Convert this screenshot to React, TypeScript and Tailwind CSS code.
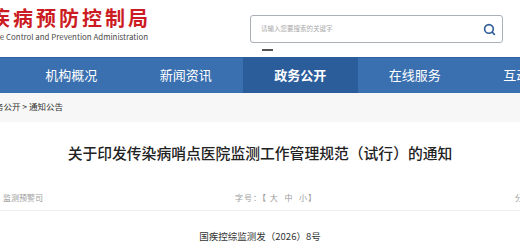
import { Search } from "lucide-react";

const NAV = ["机构概况", "新闻资讯", "政务公开", "在线服务", "互动交流"];

export default function App() {
  return (
    <div
      className="h-[245px] w-[520px] overflow-hidden bg-white text-[#333]"
      style={{ fontFamily: '"Noto Sans CJK SC", "Noto Sans", sans-serif' }}
    >
      {/* header */}
      <header className="flex h-[57px]">
        <div className="flex w-[151px] shrink-0 flex-col items-end pt-[5px]">
          <div className="whitespace-nowrap text-[20px] leading-[26px] font-bold tracking-[3px] text-[#cc1c23]">
            国家疾病预防控制局
          </div>
          <div className="mr-[3px] mt-[1px] whitespace-nowrap text-[7.9px] leading-[10px] text-[#4a4a4a]">
            National Disease Control and Prevention Administration
          </div>
        </div>
        <div className="ml-[99px] flex flex-col pt-[15px]">
          <div className="flex h-[28px] w-[253px] items-center justify-between rounded-[3px] border border-[#a9b0ba] pl-[10px] pr-[6px]">
            <span className="text-[6.5px] text-[#aaa]">请输入您要搜索的关键字</span>
            <Search className="h-[13px] w-[13px] text-[#2c5c98]" strokeWidth={3} />
          </div>
          <div className="ml-[12px] mt-[6px] h-[1.5px] w-[11px] bg-[#555]" />
        </div>
      </header>

      {/* nav */}
      <nav className="flex h-[36px] bg-[#3a6fb0] shadow-[inset_0_1px_0_#2f62a3]">
        <div className="w-[14px] shrink-0" />
        {NAV.map((item, i) => (
          <div
            key={item}
            className={
              i === 2
                ? "flex w-[114.5px] shrink-0 items-center justify-center bg-[#2c5d9b] text-[13px] font-bold text-white"
                : "flex w-[114.5px] shrink-0 items-center justify-center text-[13px] text-white"
            }
          >
            {item}
          </div>
        ))}
      </nav>

      {/* breadcrumb */}
      <div className="flex h-[29px] items-center justify-end bg-[#f7f7f7] pb-[3px]">
        <div className="mr-[457px] whitespace-nowrap text-[8.5px] text-[#333]">
          首页 &gt; 政务公开 &gt; 通知公告
        </div>
      </div>

      {/* article */}
      <div className="flex flex-col items-center pt-[21px]">
        <h1 className="text-[14.8px] leading-[20px] font-medium text-[#222]">
          关于印发传染病哨点医院监测工作管理规范（试行）的通知
        </h1>
      </div>
      <div className="mt-[22px] flex h-[26px] items-center border-b border-[#eee] pl-[3px] text-[8px] text-[#9a9a9a]">
        <span className="w-[232px] shrink-0">监测预警司</span>
        <span className="w-[280px] shrink-0 whitespace-nowrap tracking-[1px]">
          字号：【 大&nbsp;&nbsp;中&nbsp;&nbsp;小】
        </span>
        <span className="shrink-0 whitespace-nowrap">分享</span>
      </div>
      <div className="flex justify-center pt-[18px]">
        <span className="text-[9.5px] text-[#333]">国疾控综监测发（2026）8号</span>
      </div>
    </div>
  );
}
